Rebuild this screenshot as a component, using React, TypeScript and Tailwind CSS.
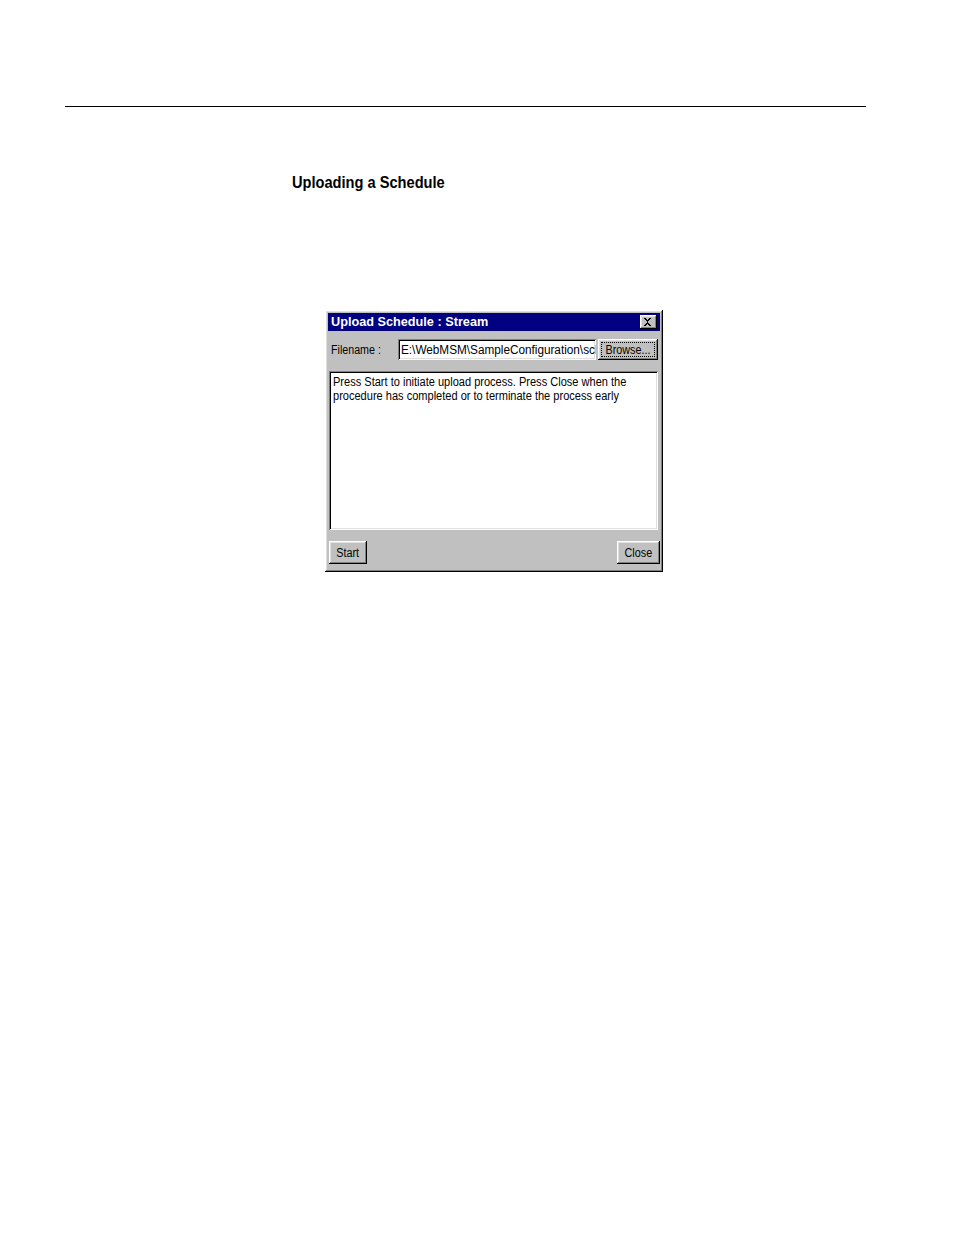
import React from "react";

const raised =
  "shadow-[inset_-1px_-1px_#000000,inset_1px_1px_#ffffff,inset_-2px_-2px_#808080,inset_2px_2px_#dfdfdf]";
const sunken =
  "shadow-[inset_1px_1px_#808080,inset_-1px_-1px_#ffffff,inset_2px_2px_#000000,inset_-2px_-2px_#dfdfdf]";

const ui = { fontFamily: '"Liberation Sans", Arial, sans-serif' };

export default function App() {
  return (
    <div className="w-[954px] h-[1235px] bg-white relative overflow-hidden" style={ui}>
      <div className="pt-[106px] pl-[65px]">
        <div className="w-[801px] h-px bg-black" />
      </div>
      <div className="pl-[292px] pt-[64px] h-[86px]">
        <h1 className="inline-block origin-left scale-x-[0.86] text-[17px] leading-[22px] font-bold text-black m-0 whitespace-nowrap">
          Uploading a Schedule
        </h1>
      </div>
      <div className="pl-[325px] pt-[117px]">
        <div className={`w-[338px] h-[262px] bg-[#c0c0c0] p-[3px] flex flex-col ${raised}`}>
          <div className="h-[18px] bg-[#000080] flex items-center justify-between pl-[3px] pr-[3px]">
            <span className="text-white text-[12.7px] font-bold leading-none whitespace-nowrap">
              Upload Schedule : Stream
            </span>
            <div className={`w-[17px] h-[14px] bg-[#c0c0c0] flex items-center justify-center ${raised}`}>
              <svg width="9" height="8" viewBox="0 0 9 8" shapeRendering="crispEdges">
                <path d="M0 0h2v1h1v1h1V1h1V0h2v1h-1v1h-1v1h-1v2h1v1h1v1h1v1h-2v-1h-1v-1h-1v1h-1v1H0v-1h1v-1h1v-1h1V3H2V2H1V1H0z" fill="#000" />
              </svg>
            </div>
          </div>
          <div className="mt-[8px] h-[21px] flex items-center">
            <span className="ml-[3px] w-[67px] text-[12px] text-black leading-none">
              <span className="inline-block origin-left scale-x-[0.89] whitespace-nowrap">Filename :</span>
            </span>
            <div className={`w-[198px] h-[21px] bg-white flex items-center pl-[3px] overflow-hidden whitespace-nowrap ${sunken}`}>
              <span className="inline-block origin-left scale-x-[0.98] text-[12px] text-black leading-none">E:\WebMSM\SampleConfiguration\sch</span>
            </div>
            <div className={`ml-[2px] w-[60px] h-[21px] flex items-center justify-center p-[3px] ${raised}`}>
              <div className="w-full h-full border border-dotted border-black flex items-center justify-center">
                <span className="inline-block scale-x-[0.9] text-[12px] text-black leading-none">Browse...</span>
              </div>
            </div>
          </div>
          <div className={`mt-[11px] ml-[1px] w-[329px] h-[159px] bg-white pt-[4px] pl-[4px] pr-[4px] ${sunken}`}>
            <p className="inline-block origin-left scale-x-[0.92] text-[12px] leading-[14px] text-black m-0 whitespace-nowrap">
              Press Start to initiate upload process. Press Close when the
              <br />
              procedure has completed or to terminate the process early
            </p>
          </div>
          <div className="mt-[11px] flex justify-between">
            <div className={`ml-[1px] w-[38px] h-[23px] flex items-center justify-center ${raised}`}>
              <span className="inline-block scale-x-[0.9] text-[12px] text-black leading-none">Start</span>
            </div>
            <div className={`w-[43px] h-[23px] flex items-center justify-center ${raised}`}>
              <span className="inline-block scale-x-[0.9] text-[12px] text-black leading-none">Close</span>
            </div>
          </div>
        </div>
      </div>
    </div>
  );
}
